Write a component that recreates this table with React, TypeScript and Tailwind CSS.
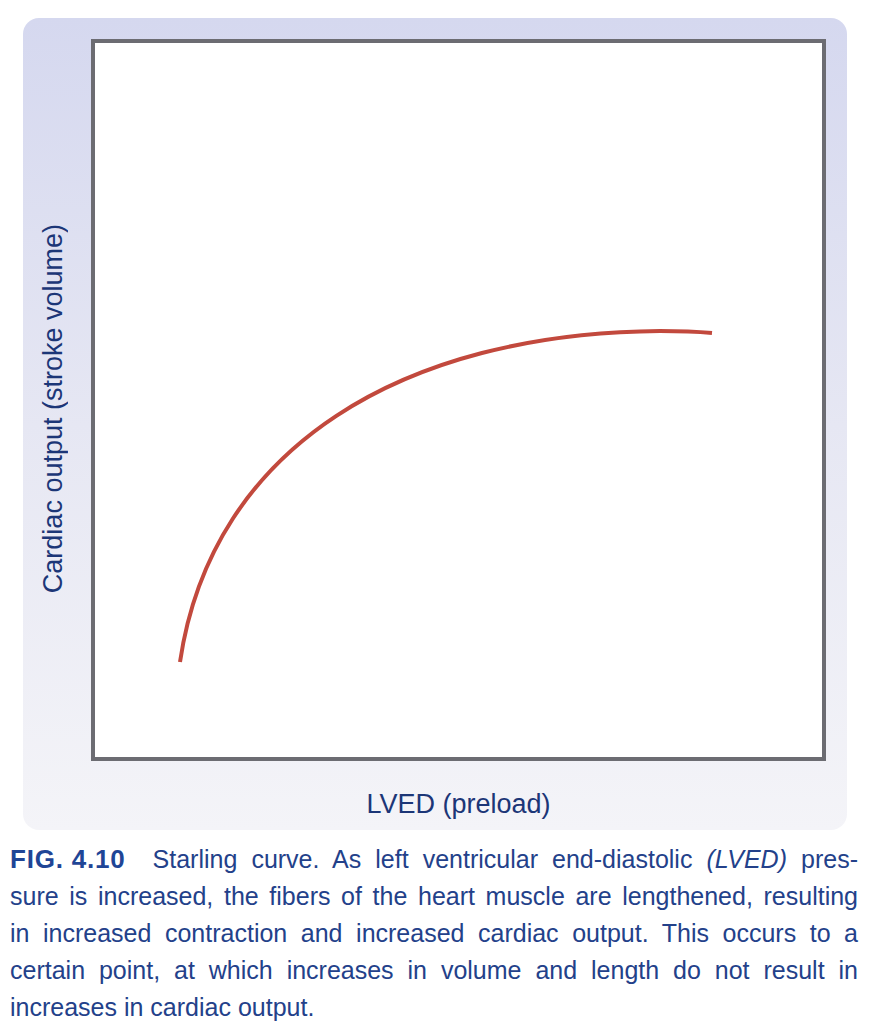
export default function App() {
  const captionLines = [
    'sure is increased, the fibers of the heart muscle are lengthened, resulting',
    'in increased contraction and increased cardiac output. This occurs to a',
    'certain point, at which increases in volume and length do not result in',
  ]

  return (
    <div className="min-h-[1024px] w-[873px] bg-white pt-[18px] font-['Liberation_Sans',Arial,sans-serif]">
      {/* figure panel */}
      <div className="ml-[23px] w-[824px] rounded-[16px] bg-linear-to-b from-[#d5d8ef] via-[#e6e7f3] to-[#f4f4f8] pb-[11px] pr-[21px] pt-[21px]">
        <div className="flex">
          {/* y axis label */}
          <div className="flex w-[68px] items-center justify-center pr-[8px] pt-[18px]">
            <span className="rotate-180 whitespace-nowrap text-[27px] leading-[30px] text-[#1c3677] [writing-mode:vertical-rl]">
              Cardiac output (stroke volume)
            </span>
          </div>

          {/* plot */}
          <div className="h-[722px] w-[735px] border-4 border-[#6c6c72] bg-white">
            <svg width="727" height="714" viewBox="95 43 727 714" className="block">
              <path
                d="M180 662 C 212 445 405 333 660 331 Q 690 331 712 333"
                fill="none"
                stroke="#c2493d"
                strokeWidth="4"
              />
            </svg>
          </div>
        </div>

        {/* x axis label */}
        <div className="ml-[68px] mt-[28px] w-[735px] text-center text-[27px] leading-[30px] text-[#1c3677]">
          LVED (preload)
        </div>
      </div>

      {/* caption */}
      <div className="mt-[11px] pl-[10px] pr-[15px] text-[25px] leading-[37px] text-[#23418a]">
        <div className="flex items-baseline gap-[27px] whitespace-nowrap">
          <span className="text-[26px] font-bold tracking-[0.8px] text-[#1f4596]">FIG. 4.10</span>
          <span className="flex-1 text-justify [text-align-last:justify]">
            Starling curve. As left ventricular end-diastolic <i>(LVED)</i> pres-
          </span>
        </div>
        {captionLines.map((line, i) => (
          <div key={i} className="whitespace-nowrap text-justify [text-align-last:justify]">
            {line}
          </div>
        ))}
        <div className="whitespace-nowrap">increases in cardiac output.</div>
      </div>
    </div>
  )
}
